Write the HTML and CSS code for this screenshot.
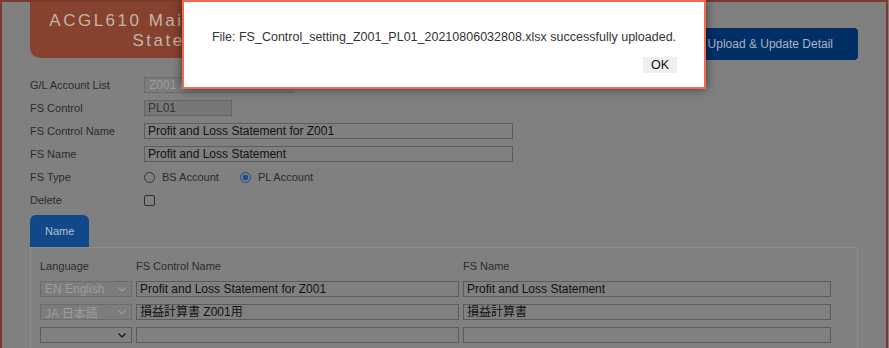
FILE: index.html
```html
<!DOCTYPE html>
<html lang="en">
<head>
<meta charset="utf-8">
<title>ACGL610</title>
<link rel="stylesheet" href="styles.css">
</head>
<body>
<div class="frame">
  <header class="top">
    <div class="title"><span class="title-l1">ACGL610 Maintain Financial</span><span class="title-l2">Statement</span></div>
    <button class="btn-upload" type="button">Upload &amp; Update Detail</button>
  </header>

  <div class="form">
    <div class="lbl">G/L Account List</div>
    <div class="field"><div class="sel sel-dis w-gl"><span>Z001 / Z001</span><svg class="chev" viewBox="0 0 8 5" width="8" height="5"><polyline points="0.5,0.5 4,4 7.5,0.5"/></svg></div></div>

    <div class="lbl">FS Control</div>
    <div class="field"><div class="inp inp-dis w-ctl">PL01</div></div>

    <div class="lbl">FS Control Name</div>
    <div class="field"><div class="inp w-name">Profit and Loss Statement for Z001</div></div>

    <div class="lbl">FS Name</div>
    <div class="field"><div class="inp w-name">Profit and Loss Statement</div></div>

    <div class="lbl">FS Type</div>
    <div class="field radios">
      <span class="radio"></span><span class="rtxt">BS Account</span>
      <span class="radio on"></span><span class="rtxt">PL Account</span>
    </div>

    <div class="lbl">Delete</div>
    <div class="field"><span class="check"></span></div>
  </div>

  <div class="tabs"><div class="tab">Name</div></div>
  <div class="panel">
    <div class="grid">
      <div class="hd">Language</div>
      <div class="hd">FS Control Name</div>
      <div class="hd">FS Name</div>

      <div class="sel sel-dis"><span>EN English</span><svg class="chev" viewBox="0 0 8 5" width="8" height="5"><polyline points="0.5,0.5 4,4 7.5,0.5"/></svg></div>
      <div class="inp">Profit and Loss Statement for Z001</div>
      <div class="inp">Profit and Loss Statement</div>

      <div class="sel sel-dis"><span>JA 日本語</span><svg class="chev" viewBox="0 0 8 5" width="8" height="5"><polyline points="0.5,0.5 4,4 7.5,0.5"/></svg></div>
      <div class="inp">損益計算書 Z001用</div>
      <div class="inp">損益計算書</div>

      <div class="sel"><span></span><svg class="chev dark" viewBox="0 0 8 5" width="8" height="5"><polyline points="0.5,0.5 4,4 7.5,0.5"/></svg></div>
      <div class="inp"></div>
      <div class="inp"></div>
    </div>
  </div>
</div>

<div class="modal" role="dialog">
  <p class="msg">File: FS_Control_setting_Z001_PL01_20210806032808.xlsx successfully uploaded.</p>
  <div class="actions"><button class="ok" type="button">OK</button></div>
</div>
</body>
</html>
```

FILE: styles.css
```css
html, body {
  margin: 0;
  padding: 0;
  background: #808080;
  font-family: "Liberation Sans", Arial, "Noto Sans CJK JP", sans-serif;
}

.frame {
  width: 888px;
  height: 348px;
  box-sizing: border-box;
  border: 2px solid #7c3a2b;
  border-bottom: none;
  padding: 0 28px;
  overflow: hidden;
}

.top {
  display: flex;
  justify-content: space-between;
  align-items: flex-start;
  height: 56px;
}

.title {
  width: 320px;
  height: 56px;
  box-sizing: border-box;
  padding-top: 9px;
  background: #87412f;
  border-radius: 0 0 10px 10px;
  color: #c2b5ab;
  font-size: 17px;
  line-height: 20px;
  letter-spacing: 2.5px;
  text-align: center;
  overflow: hidden;
}

.title-l1, .title-l2 {
  display: block;
  white-space: nowrap;
}

.title-l2 {
  margin-right: 15px;
}

.btn-upload {
  margin-top: 26px;
  height: 32px;
  padding: 0 25px;
  border: none;
  border-radius: 4px;
  background: #002f66;
  color: #a9b3c4;
  font-family: "Liberation Sans", Arial, sans-serif;
  font-size: 12px;
}

.form {
  display: grid;
  grid-template-columns: 114px 1fr;
  grid-auto-rows: 16px;
  row-gap: 7px;
  margin-top: 19px;
}

.lbl, .hd {
  font-size: 11px;
  line-height: 16px;
  color: #2b2b2b;
}

.field {
  display: flex;
  align-items: center;
}

.inp {
  height: 16px;
  box-sizing: border-box;
  border: 1px solid #5c5c5c;
  background: #808080;
  padding: 0 3px;
  font-size: 12px;
  line-height: 14px;
  color: #111;
  white-space: nowrap;
  overflow: hidden;
}

.inp-dis {
  background: #777777;
  border-color: #646464;
  color: #363636;
}

.w-gl { width: 149px; }
.w-ctl { width: 88px; }
.w-name { width: 369px; }

.sel {
  height: 16px;
  box-sizing: border-box;
  display: flex;
  align-items: center;
  justify-content: space-between;
  border: 1px solid #5c5c5c;
  background: #808080;
  padding: 0 5px 0 4px;
  font-size: 12px;
  color: #111;
  white-space: nowrap;
}

.sel-dis {
  background: #7c7c7c;
  border-color: #6c6c6c;
  color: #9e9e9e;
}

.chev {
  fill: none;
  stroke: #9a9a9a;
  stroke-width: 1.2;
}

.chev.dark { stroke: #111; }

.radio {
  width: 11px;
  height: 11px;
  box-sizing: border-box;
  border: 1px solid #333;
  border-radius: 50%;
  margin-right: 7px;
}

.radio.on {
  border-color: #1a4e90;
  background: radial-gradient(circle, #1a4e90 0 2.6px, #808080 3.2px);
}

.rtxt {
  font-size: 11px;
  color: #2b2b2b;
  margin-right: 21px;
}

.check {
  width: 11px;
  height: 11px;
  box-sizing: border-box;
  border: 1px solid #2e2e2e;
  border-radius: 2px;
}

.tabs {
  margin-top: 7px;
  display: flex;
}

.tab {
  width: 59px;
  height: 32px;
  box-sizing: border-box;
  padding-left: 15px;
  background: #11488a;
  border-radius: 6px 6px 0 0;
  color: #b4c1d4;
  font-size: 11px;
  line-height: 32px;
}

.panel {
  border: 1px solid #8d8d8d;
  border-bottom: none;
  height: 120px;
  padding: 10px 0 0 9px;
}

.grid {
  display: grid;
  grid-template-columns: 92px 323px 368px;
  grid-auto-rows: 16px;
  column-gap: 4px;
  row-gap: 7px;
}

.modal {
  position: absolute;
  left: 182px;
  top: 0;
  width: 524px;
  height: 89px;
  box-sizing: border-box;
  padding: 28px 27px 0;
  background: #fff;
  border: 2px solid #f06a4b;
  box-shadow: 0 0 10px rgba(0, 0, 0, 0.55);
}

.msg {
  margin: 0;
  font-size: 12.5px;
  line-height: 15px;
  color: #333;
  text-align: center;
  white-space: nowrap;
}

.actions {
  display: flex;
  justify-content: flex-end;
  margin-top: 12px;
}

.ok {
  height: 16px;
  padding: 0 8px;
  border: none;
  background: #efefef;
  color: #111;
  font-family: "Liberation Sans", Arial, sans-serif;
  font-size: 12.5px;
  line-height: 16px;
}
```
